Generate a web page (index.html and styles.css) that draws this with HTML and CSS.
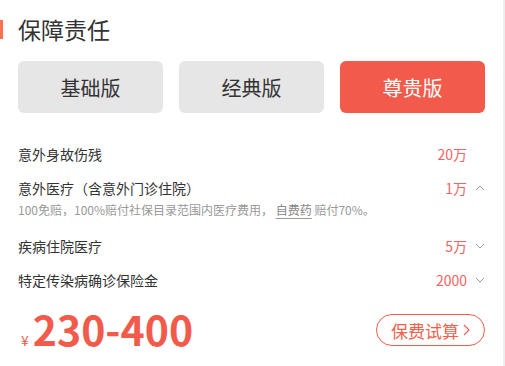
FILE: index.html
```html
<!DOCTYPE html>
<html lang="zh-CN">
<head>
<meta charset="utf-8">
<title>保障责任</title>
<link rel="stylesheet" href="styles.css">
</head>
<body>
<div class="card">
  <h2 class="title">保障责任</h2>
  <div class="plans">
    <div class="plan">基础版</div>
    <div class="plan">经典版</div>
    <div class="plan active">尊贵版</div>
  </div>
  <div class="items">
    <div class="item">
      <div class="head">
        <span class="label">意外身故伤残</span>
        <span class="value">20万</span>
        <svg class="chev hidden" viewBox="0 0 10 6" width="10" height="6"><path d="M1 1 L5 5 L9 1" fill="none" stroke="#999" stroke-width="1"/></svg>
      </div>
    </div>
    <div class="item">
      <div class="head">
        <span class="label">意外医疗（含意外门诊住院）</span>
        <span class="value">1万</span>
        <svg class="chev" viewBox="0 0 10 6" width="10" height="6"><path d="M1 5 L5 1 L9 5" fill="none" stroke="#999" stroke-width="1"/></svg>
      </div>
      <p class="desc">100免赔，100%赔付社保目录范围内医疗费用， <span class="link">自费药</span> 赔付70%。</p>
    </div>
    <div class="item">
      <div class="head">
        <span class="label">疾病住院医疗</span>
        <span class="value">5万</span>
        <svg class="chev" viewBox="0 0 10 6" width="10" height="6"><path d="M1 1 L5 5 L9 1" fill="none" stroke="#999" stroke-width="1"/></svg>
      </div>
    </div>
    <div class="item">
      <div class="head">
        <span class="label">特定传染病确诊保险金</span>
        <span class="value">2000</span>
        <svg class="chev" viewBox="0 0 10 6" width="10" height="6"><path d="M1 1 L5 5 L9 1" fill="none" stroke="#999" stroke-width="1"/></svg>
      </div>
    </div>
  </div>
  <div class="footer">
    <div class="price"><span class="yen">¥</span><span class="num">230-400</span></div>
    <div class="calc">保费试算<svg class="arrow" viewBox="0 0 7 12" width="7" height="12"><path d="M1 1 L6 6 L1 11" fill="none" stroke="#f25b4b" stroke-width="1.1"/></svg></div>
  </div>
</div>
</body>
</html>
```

FILE: styles.css
```css
* { box-sizing: border-box; }
html, body { margin: 0; padding: 0; background: #fff; }
body {
  font-family: "Noto Sans CJK SC", "Noto Sans", sans-serif;
  color: #333;
}
.card {
  width: 505px;
  height: 366px;
  padding: 17px 18px 0 18px;
  border-right: 2px solid #eeeeee;
}
.title {
  margin: 0 0 0 -18px;
  display: flex;
  align-items: center;
  font-size: 23px;
  line-height: 24px;
  font-weight: normal;
  color: #333;
}
.title::before {
  content: "";
  width: 3px;
  height: 19px;
  background: #ff6f50;
  margin-right: 15px;
}
.plans {
  display: flex;
  gap: 16px;
  margin-top: 20px;
}
.plan {
  flex: 1;
  height: 52px;
  border-radius: 6px;
  background: #e6e6e6;
  color: #333;
  font-size: 20px;
  display: flex;
  align-items: center;
  justify-content: center;
}
.plan.active {
  background: #f25b4b;
  color: #fff;
}
.items { margin-top: 24px; }
.item { padding: 7px 0; }
.head {
  display: flex;
  align-items: center;
  font-size: 14px;
  line-height: 20px;
}
.label { flex: 1; color: #333; }
.value { color: #f26464; margin-right: 8px; }
.chev { display: block; }
.chev.hidden { visibility: hidden; }
.desc {
  margin: 3px 0 3px;
  font-size: 12px;
  line-height: 18px;
  color: #999;
}
.link {
  color: #888;
  text-decoration: underline;
  text-decoration-color: #999;
  text-underline-offset: 3px;
}
.footer {
  display: flex;
  justify-content: space-between;
  align-items: flex-start;
  margin-top: 17px;
}
.price {
  color: #f25b4b;
  line-height: 28px;
}
.yen {
  font-size: 14px;
  margin: 0 4px 0 3px;
}
.num {
  font-size: 41px;
  font-weight: bold;
}
.calc {
  height: 32px;
  border: 1px solid #f25b4b;
  border-radius: 16px;
  padding: 0 14px 0 14px;
  display: flex;
  align-items: center;
  gap: 4px;
  color: #f0604a;
  font-size: 17px;
}
.arrow { display: block; }
```
